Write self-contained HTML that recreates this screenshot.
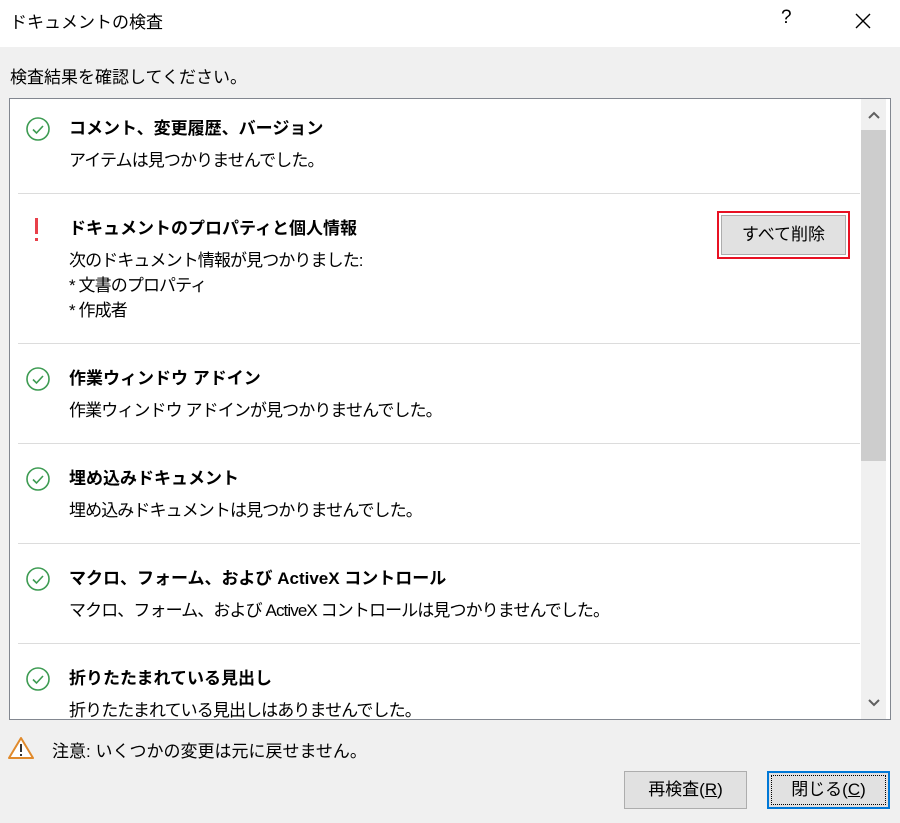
<!DOCTYPE html>
<html><head><meta charset="utf-8"><style>
*{margin:0;padding:0;box-sizing:border-box}
body{width:900px;height:823px;background:#f0f0f0;font-family:"Liberation Sans","Noto Sans CJK JP",sans-serif;font-size:17px;color:#000;position:relative;overflow:hidden}
.a{position:absolute;white-space:nowrap}
.n{letter-spacing:-0.9px}
.title{position:absolute;left:0;top:0;width:900px;height:47px;background:#fff}
.box{position:absolute;left:9px;top:98px;width:882px;height:622px;background:#fff;border:1px solid #828790}
.sep{position:absolute;left:8px;width:842px;height:1px;background:#dcdcdc}
.h{font-weight:bold}
.btn{position:absolute;background:#e1e1e1;border:1px solid #adadad;text-align:center;line-height:36px}
</style></head><body>
<div class="title"></div>
<div class="a" style="left:10px;top:8px">ドキュメントの検査</div>
<div class="a" style="left:781px;top:7px;font-size:19px">?</div>
<svg class="a" style="left:855px;top:13px" width="16" height="16"><path d="M1 1L15 15M15 1L1 15" stroke="#000" stroke-width="1.4"/></svg>
<div class="a" style="left:10px;top:63px">検査結果を確認してください。</div>
<div class="box">
 <div style="position:absolute;left:851px;top:0;width:25px;height:620px;background:#f0f0f0"></div>
 <div style="position:absolute;left:851px;top:31px;width:25px;height:331px;background:#cdcdcd"></div>
 <svg class="a" style="left:858px;top:12px" width="12" height="8"><path d="M1 7L6 2L11 7" stroke="#606060" stroke-width="2" fill="none"/></svg>
 <svg class="a" style="left:858px;top:600px" width="12" height="8"><path d="M1 1L6 6L11 1" stroke="#606060" stroke-width="2" fill="none"/></svg>
 <div class="sep" style="top:94px"></div>
 <div class="sep" style="top:244px"></div>
 <div class="sep" style="top:344px"></div>
 <div class="sep" style="top:444px"></div>
 <div class="sep" style="top:544px"></div>
</div>
<svg class="a" style="left:26px;top:117px" width="24" height="24"><circle cx="12" cy="12" r="11" fill="none" stroke="#3d9b52" stroke-width="1.6"/><path d="M7 12.5L10.5 16L17 9" fill="none" stroke="#3d9b52" stroke-width="1.6"/></svg>
<div class="a h" style="left:69px;top:114px">コメント、変更履歴、バージョン</div>
<div class="a n" style="left:69px;top:146px">アイテムは見つかりませんでした。</div>

<div class="a" style="left:35px;top:218px;width:3px;height:16px;background:#e8404a"></div>
<div class="a" style="left:35px;top:238px;width:3px;height:3px;background:#e8404a"></div>
<div class="a h" style="left:69px;top:214px">ドキュメントのプロパティと個人情報</div>
<div class="a n" style="left:69px;top:246px">次のドキュメント情報が見つかりました:</div>
<div class="a n" style="left:69px;top:271px">* 文書のプロパティ</div>
<div class="a n" style="left:69px;top:296px">* 作成者</div>
<div class="a" style="left:717px;top:211px;width:133px;height:48px;border:2px solid #e81123"></div>
<div class="btn" style="left:721px;top:215px;width:125px;height:40px;line-height:38px">すべて削除</div>

<svg class="a" style="left:26px;top:367px" width="24" height="24"><circle cx="12" cy="12" r="11" fill="none" stroke="#3d9b52" stroke-width="1.6"/><path d="M7 12.5L10.5 16L17 9" fill="none" stroke="#3d9b52" stroke-width="1.6"/></svg>
<div class="a h" style="left:69px;top:364px">作業ウィンドウ アドイン</div>
<div class="a n" style="left:69px;top:396px">作業ウィンドウ アドインが見つかりませんでした。</div>

<svg class="a" style="left:26px;top:467px" width="24" height="24"><circle cx="12" cy="12" r="11" fill="none" stroke="#3d9b52" stroke-width="1.6"/><path d="M7 12.5L10.5 16L17 9" fill="none" stroke="#3d9b52" stroke-width="1.6"/></svg>
<div class="a h" style="left:69px;top:464px">埋め込みドキュメント</div>
<div class="a n" style="left:69px;top:496px">埋め込みドキュメントは見つかりませんでした。</div>

<svg class="a" style="left:26px;top:567px" width="24" height="24"><circle cx="12" cy="12" r="11" fill="none" stroke="#3d9b52" stroke-width="1.6"/><path d="M7 12.5L10.5 16L17 9" fill="none" stroke="#3d9b52" stroke-width="1.6"/></svg>
<div class="a h" style="left:69px;top:564px">マクロ、フォーム、および ActiveX コントロール</div>
<div class="a n" style="left:69px;top:596px">マクロ、フォーム、および ActiveX コントロールは見つかりませんでした。</div>

<svg class="a" style="left:26px;top:667px" width="24" height="24"><circle cx="12" cy="12" r="11" fill="none" stroke="#3d9b52" stroke-width="1.6"/><path d="M7 12.5L10.5 16L17 9" fill="none" stroke="#3d9b52" stroke-width="1.6"/></svg>
<div class="a h" style="left:69px;top:664px">折りたたまれている見出し</div>
<div class="a n" style="left:69px;top:696px;height:23px;overflow:hidden">折りたたまれている見出しはありませんでした。</div>

<svg class="a" style="left:8px;top:736px" width="26" height="24"><path d="M13 2L25 22H1Z" fill="#fff" stroke="#e08a2c" stroke-width="2" stroke-linejoin="round"/><rect x="12" y="8" width="2" height="8" fill="#333"/><rect x="12" y="18" width="2" height="2" fill="#333"/></svg>
<div class="a" style="left:52px;top:737px">注意: いくつかの変更は元に戻せません。</div>

<div class="btn" style="left:624px;top:771px;width:123px;height:38px">再検査(<u>R</u>)</div>
<div class="btn" style="left:767px;top:771px;width:123px;height:38px;border:2px solid #0078d7;line-height:34px"><div style="position:absolute;left:2px;top:2px;right:2px;bottom:2px;border:1px dotted #000"></div>閉じる(<u>C</u>)</div>
</body></html>
